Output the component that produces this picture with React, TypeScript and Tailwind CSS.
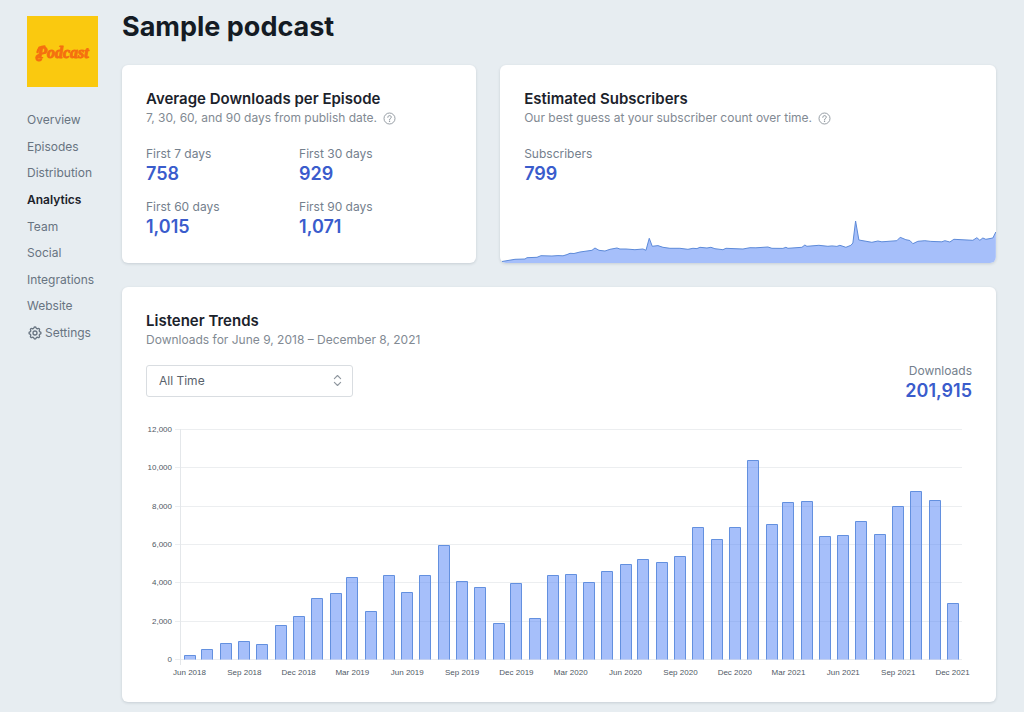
import { useState } from "react";
import { ChevronsUpDown } from "lucide-react";
import { HiOutlineCog } from "react-icons/hi";
import clsx from "clsx";

const NAV_ITEMS = [
  "Overview",
  "Episodes",
  "Distribution",
  "Analytics",
  "Team",
  "Social",
  "Integrations",
  "Website",
  "Settings",
];

const AVERAGES = [
  { label: "First 7 days", value: "758" },
  { label: "First 30 days", value: "929" },
  { label: "First 60 days", value: "1,015" },
  { label: "First 90 days", value: "1,071" },
];

// Monthly downloads, starting June 2018
const DOWNLOADS = [
  200, 520, 815, 940, 783, 1790, 2245, 3185, 3445, 4280, 2505, 4365, 3515,
  4370, 5965, 4050, 3760, 1880, 3985, 2125, 4400, 4450, 4000, 4575, 4975, 5200,
  5065, 5355, 6870, 6280, 6870, 10390, 7065, 8175, 8265, 6435, 6490, 7205,
  6540, 8005, 8750, 8280, 2940,
];

const SUBSCRIBER_LINE =
  "2,46.5 15,44.3 25,44 27,42.7 37,42.3 41,40.7 52,41 58,40.6 63,40.8 67,39.6 70,38.3 74,38.5 80,37 92,35.3 95,33 99,35.3 105,36 110,34.3 117,33 120,34 126,34 135,34.7 143,34 146,35.3 149.3,23.3 152.3,31.3 158,30.6 163,32.3 170,33.3 180,33.3 188,34.3 193,33.3 197,33.6 200,32.3 207,33 211,32.3 215,33.7 223,34.7 226,33.3 243,34 250,32.7 256,32.8 268,32 272,33.3 283,33.4 286,32.3 288,33.3 302,32.3 305,30 307,31.3 319,30.3 328,31.3 332,30.9 337,31.4 340,30.3 346,32.3 351,30.3 353,28 355.7,6 359,25 372,27.3 378,26 382,26.8 397,25.7 400.3,22.3 406,24.7 410,25.5 413,28.7 418,26.3 425,25.7 431,26.4 442,26.8 445,25.7 450,27 454,24.3 473,25.3 477,22.7 480,25.3 483,23 486,24.3 493,23 496,17";

const DAY = 24 * 60 * 60 * 1000;
const START = Date.UTC(2018, 5, 1);
const BASELINE = 242;
const PLOT_HEIGHT = 230;

function monthX(index: number) {
  const days = (Date.UTC(2018, 5 + index, 1) - START) / DAY;
  return 43.5 + (days * 763) / 1279;
}

function monthLabel(index: number) {
  const date = new Date(Date.UTC(2018, 5 + index, 1));
  const month = ["Jun", "Sep", "Dec", "Mar"][(index / 3) % 4];
  return `${month} ${date.getUTCFullYear()}`;
}

function Card({
  className,
  children,
}: {
  className?: string;
  children: React.ReactNode;
}) {
  return (
    <section
      className={clsx(
        "rounded-md bg-white shadow-[0_1px_3px_rgba(30,50,70,0.16)]",
        className
      )}
    >
      {children}
    </section>
  );
}

function HelpButton() {
  return (
    <button type="button" aria-label="Help" className="text-[#8b939b]">
      <svg width="13" height="13" viewBox="0 0 26 26" fill="none">
        <circle cx="13" cy="13" r="11" stroke="currentColor" strokeWidth="1.8" />
        <path
          d="M9.6 10.6c0-2 1.5-3.3 3.5-3.3s3.5 1.2 3.5 3c0 2.4-3.5 2.6-3.5 5"
          stroke="currentColor"
          strokeWidth="2"
          strokeLinecap="round"
        />
        <circle cx="13.1" cy="18.6" r="1.4" fill="currentColor" />
      </svg>
    </button>
  );
}

function CardHeading({
  title,
  subtitle,
  help,
}: {
  title: string;
  subtitle: string;
  help?: boolean;
}) {
  return (
    <div>
      <h2 className="text-[15px] leading-5 font-semibold text-[#1b222b]">
        {title}
      </h2>
      <div className="flex items-center gap-1.5 text-[12px] leading-[18px] text-[#828a93]">
        <p>{subtitle}</p>
        {help && <HelpButton />}
      </div>
    </div>
  );
}

function Stat({ label, value }: { label: string; value: string }) {
  return (
    <div>
      <dt className="text-[12px] leading-5 text-[#74808d]">{label}</dt>
      <dd className="text-[18px] leading-5 font-semibold text-[#3a5ccc]">
        {value}
      </dd>
    </div>
  );
}

function Logo() {
  return (
    <svg viewBox="0 0 71 71" className="w-full" role="img" aria-label="Podcast">
      <rect width="71" height="71" fill="#fac90f" />
      <text
        x="36"
        y="42"
        textAnchor="middle"
        fill="#f5700f"
        stroke="#f5700f"
        strokeWidth="1"
        strokeLinejoin="round"
        className="font-['Liberation_Serif',serif] text-[16px] font-bold italic"
      >
        Podcast
      </text>
      <path
        d="M14 43.500a2.600 2.600 0 1 1-2-4.300M10.500 36c0-3 3-5.500 7-5.500"
        fill="none"
        stroke="#f5700f"
        strokeWidth="2.4"
        strokeLinecap="round"
      />
    </svg>
  );
}

function SubscribersChart() {
  return (
    <svg
      viewBox="0 0 496 48"
      preserveAspectRatio="none"
      className="block h-12 w-full rounded-b-md"
    >
      <polygon points={`2,48 ${SUBSCRIBER_LINE} 496,48`} fill="#a6bffa" />
      <polyline
        points={SUBSCRIBER_LINE}
        fill="none"
        stroke="#5c8ad8"
        strokeWidth="1"
        strokeLinejoin="round"
      />
    </svg>
  );
}

function DownloadsChart() {
  const ticks = [0, 2000, 4000, 6000, 8000, 10000, 12000];

  return (
    <svg
      viewBox="0 0 826 261"
      className="mt-4 block w-full font-['Liberation_Sans',Arial,sans-serif] text-[8px]"
    >
      {ticks.map((tick) => {
        const y = BASELINE - Math.round((tick * PLOT_HEIGHT) / 12000);
        return (
          <g key={tick}>
            <path d={`M29 ${y + 0.5}H816`} stroke="#eceef0" />
            <text x="26" y={y + 3} textAnchor="end" fill="#4f5965">
              {tick.toLocaleString("en-US")}
            </text>
          </g>
        );
      })}
      <path d="M34.5 12V248" stroke="#e4e7ea" />

      {DOWNLOADS.map((value, i) => {
        const left = Math.round(monthX(i) - 6) + 0.5;
        const top = Math.round(BASELINE - (value * PLOT_HEIGHT) / 12000) + 0.5;
        return (
          <path
            key={i}
            d={`M${left} ${BASELINE + 0.5}V${top}h11V${BASELINE + 0.5}`}
            fill="#5484f5"
            fillOpacity="0.52"
            stroke="#6390df"
          />
        );
      })}

      {DOWNLOADS.map((_, i) =>
        i % 3 === 0 ? (
          <text
            key={i}
            x={monthX(i)}
            y="258"
            textAnchor="middle"
            fill="#4f5965"
          >
            {monthLabel(i)}
          </text>
        ) : null
      )}
    </svg>
  );
}

export default function App() {
  const [range, setRange] = useState("all");

  return (
    <div className="flex min-h-screen gap-6 bg-[#e7edf1] pr-7 pb-2 pl-[27px] font-['Inter',sans-serif]">
      <aside className="w-[71px] shrink-0 pt-4">
        <Logo />
        <nav className="mt-[23px]">
          <ul className="flex h-[233px] flex-col justify-between">
            {NAV_ITEMS.map((item) => (
              <li key={item}>
                <a
                  href="#"
                  className={clsx(
                    "flex items-center gap-0.5 text-[12px] leading-5",
                    item === "Analytics"
                      ? "font-semibold text-[#1b222b]"
                      : "text-[#687481]"
                  )}
                >
                  {item === "Settings" && <HiOutlineCog size={16} />}
                  {item}
                </a>
              </li>
            ))}
          </ul>
        </nav>
      </aside>

      <main className="min-w-0 flex-1 pt-[9px]">
        <h1 className="text-[27px] leading-9 font-bold text-[#141b24]">
          Sample podcast
        </h1>

        <div className="mt-5 grid grid-cols-[5fr_7fr] gap-6">
          <Card className="px-6 pt-6 pb-[26px]">
            <CardHeading
              title="Average Downloads per Episode"
              subtitle="7, 30, 60, and 90 days from publish date."
              help
            />
            <dl className="mt-[17px] grid grid-cols-2 gap-y-[13px]">
              {AVERAGES.map((stat) => (
                <Stat key={stat.label} {...stat} />
              ))}
            </dl>
          </Card>

          <Card className="flex flex-col justify-between">
            <div className="px-6 pt-6">
              <CardHeading
                title="Estimated Subscribers"
                subtitle="Our best guess at your subscriber count over time."
                help
              />
              <dl className="mt-[17px]">
                <Stat label="Subscribers" value="799" />
              </dl>
            </div>
            <SubscribersChart />
          </Card>
        </div>

        <Card className="mt-6 p-6">
          <CardHeading
            title="Listener Trends"
            subtitle="Downloads for June 9, 2018 – December 8, 2021"
          />
          <div className="mt-3 flex items-center justify-between">
            <div className="relative w-[207px]">
              <select
                aria-label="Date range"
                value={range}
                onChange={(e) => setRange(e.target.value)}
                className="h-8 w-full appearance-none rounded-[3px] border border-[#d9dde1] bg-white px-3 text-[12px] text-[#59626c]"
              >
                <option value="all">All Time</option>
                <option value="year">Last 12 Months</option>
                <option value="month">Last 30 Days</option>
              </select>
              <ChevronsUpDown
                size={15}
                strokeWidth={1.8}
                className="pointer-events-none absolute top-2 right-2 text-[#8f979f]"
              />
            </div>
            <dl className="text-right">
              <Stat label="Downloads" value="201,915" />
            </dl>
          </div>
          <DownloadsChart />
        </Card>
      </main>
    </div>
  );
}
